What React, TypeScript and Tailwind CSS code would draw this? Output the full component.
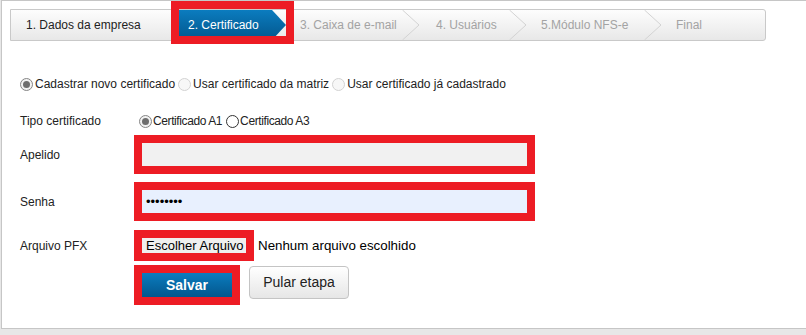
import React from "react";

const font = { fontFamily: '"Liberation Sans", Arial, sans-serif' };

type RadioKind = "checked" | "disabled" | "off";

const Radio = ({ kind }: { kind: RadioKind }) => (
  <svg width="13" height="13" viewBox="0 0 13 13" className="shrink-0">
    {kind === "checked" && (
      <>
        <circle cx="6.5" cy="6.5" r="6" fill="#f2f2f2" stroke="#858585" />
        <circle cx="6.5" cy="6.5" r="3.5" fill="#6e6e6e" />
      </>
    )}
    {kind === "disabled" && <circle cx="6.5" cy="6.5" r="6" fill="#f7f7f7" stroke="#d2d2d2" />}
    {kind === "off" && <circle cx="6.5" cy="6.5" r="6" fill="#ffffff" stroke="#333333" />}
  </svg>
);

const Chevron = () => (
  <svg width="18" height="30" viewBox="0 0 18 30" className="absolute right-0 top-0">
    <polyline points="0.5,0 17,15 0.5,30" fill="none" stroke="#d3d3d3" strokeWidth="1" />
  </svg>
);

const steps = [
  { label: "3. Caixa de e-mail", w: "w-[134px]", pl: "pl-[14px]", chevron: true },
  { label: "4. Usuários", w: "w-[107px]", pl: "pl-[16px]", chevron: true },
  { label: "5.Módulo NFS-e", w: "w-[135px]", pl: "pl-[14px]", chevron: true },
  { label: "Final", w: "flex-1", pl: "pl-[14px]", chevron: false },
];

export default function App() {
  return (
    <div className="w-[806px] h-[335px] bg-[#e7e7e7] text-[12px] text-[#222]" style={font}>
      <div className="ml-px bg-white border-l border-t border-b border-[#c6c6c6] pl-[8px] pt-[8px] pb-[23px]">
        {/* wizard */}
        <div className="w-[756px] h-[32px] flex border border-[#c9c9c9] rounded-r-[3px] bg-gradient-to-b from-[#fdfdfd] to-[#e8e8e8]">
          <div className="w-[168px] flex items-center pl-[15px] text-[#222]">1. Dados da empresa</div>
          <div className="relative w-[107px]">
            <div
              className="h-full flex items-center pl-[9px] text-white bg-gradient-to-b from-[#0b7cbf] to-[#04578d]"
              style={{ clipPath: "polygon(0 0, calc(100% - 14px) 0, 100% 50%, calc(100% - 14px) 100%, 0 100%)" }}
            >
              2. Certificado
            </div>
            <span className="absolute -top-[9px] -left-[8px] -right-[8px] -bottom-[4px] border-[8px] border-[#ed1c24]" />
          </div>
          {steps.map((s) => (
            <div key={s.label} className={`relative ${s.w} ${s.pl} flex items-center text-[#a3a3a3]`}>
              {s.label}
              {s.chevron && <Chevron />}
            </div>
          ))}
        </div>

        <div className="pl-[10px]">
          {/* origem do certificado */}
          <div className="mt-[33px] h-[20px] flex items-center">
            <Radio kind="checked" />
            <span className="ml-[2px]">Cadastrar novo certificado</span>
            <span className="ml-[3px]"><Radio kind="disabled" /></span>
            <span className="ml-[2px]">Usar certificado da matriz</span>
            <span className="ml-[3px]"><Radio kind="disabled" /></span>
            <span className="ml-[2px]">Usar certificado já cadastrado</span>
          </div>

          {/* tipo */}
          <div className="mt-[17px] h-[20px] flex items-center">
            <span className="w-[114px]">Tipo certificado</span>
            <span className="ml-[5px]"><Radio kind="checked" /></span>
            <span className="ml-px tracking-[-0.4px]">Certificado A1</span>
            <span className="ml-[4px]"><Radio kind="off" /></span>
            <span className="ml-px tracking-[-0.4px]">Certificado A3</span>
          </div>

          <div className="mt-[4px] flex items-center">
            <span className="w-[114px]">Apelido</span>
            <div className="border-[8px] border-[#ed1c24]">
              <div className="w-[385px] h-[23px] bg-[#f1f1f1]" />
            </div>
          </div>

          <div className="mt-[8px] flex items-center">
            <span className="w-[114px]">Senha</span>
            <div className="border-[8px] border-[#ed1c24]">
              <div className="w-[385px] h-[23px] bg-[#e8f0fe] pl-[4px] flex items-center text-[13px] text-black">
                ••••••••
              </div>
            </div>
          </div>

          <div className="mt-[9px] flex items-center">
            <span className="w-[114px]">Arquivo PFX</span>
            <div className="border-[8px] border-[#ed1c24]">
              <div className="w-[104px] h-[15px] bg-[#efefef] pl-[4px] flex items-center text-[13px] text-black whitespace-nowrap overflow-hidden">
                Escolher Arquivo
              </div>
            </div>
            <span className="ml-[4px] text-[13.33px] text-black">Nenhum arquivo escolhido</span>
          </div>

          <div className="mt-[4px] ml-[114px] flex items-start">
            <div className="border-[8px] border-[#ed1c24]">
              <button className="w-[90px] h-[24px] bg-gradient-to-b from-[#0b7cbf] to-[#04578d] text-white font-bold text-[14px]">
                Salvar
              </button>
            </div>
            <button className="ml-[9px] mt-px w-[100px] h-[33px] rounded-[4px] border border-[#c4c4c4] bg-gradient-to-b from-white to-[#e6e6e6] text-[14px] text-[#222]">
              Pular etapa
            </button>
          </div>
        </div>
      </div>
    </div>
  );
}
